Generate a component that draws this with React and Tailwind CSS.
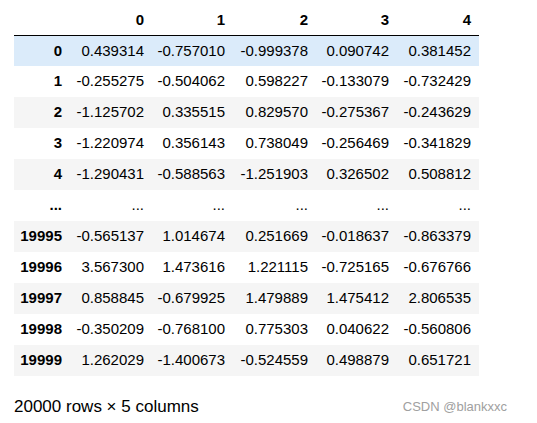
import React from "react";

const rows = [
  ["0", "0.439314", "-0.757010", "-0.999378", "0.090742", "0.381452"],
  ["1", "-0.255275", "-0.504062", "0.598227", "-0.133079", "-0.732429"],
  ["2", "-1.125702", "0.335515", "0.829570", "-0.275367", "-0.243629"],
  ["3", "-1.220974", "0.356143", "0.738049", "-0.256469", "-0.341829"],
  ["4", "-1.290431", "-0.588563", "-1.251903", "0.326502", "0.508812"],
  ["...", "...", "...", "...", "...", "..."],
  ["19995", "-0.565137", "1.014674", "0.251669", "-0.018637", "-0.863379"],
  ["19996", "3.567300", "1.473616", "1.221115", "-0.725165", "-0.676766"],
  ["19997", "0.858845", "-0.679925", "1.479889", "1.475412", "2.806535"],
  ["19998", "-0.350209", "-0.768100", "0.775303", "0.040622", "-0.560806"],
  ["19999", "1.262029", "-1.400673", "-0.524559", "0.498879", "0.651721"],
];

const widths = ["w-[56px]", "w-[82px]", "w-[81px]", "w-[83px]", "w-[81px]", "w-[82px]"];

const App = () => {
  return (
    <div className="bg-white w-[537px] h-[423px] text-black" style={{ fontFamily: '"Liberation Sans", Arial, sans-serif' }}>
      {/* dataframe table */}
      <table className="ml-[14px] table-fixed border-collapse text-[15px]">
        <thead>
          <tr className="h-[35px] border-b border-black">
            {["", "0", "1", "2", "3", "4"].map((h, i) => (
              <th key={i} className={`${widths[i]} text-right font-bold pr-2 pt-[6px]`}>
                {h}
              </th>
            ))}
          </tr>
        </thead>
        <tbody>
          {rows.map((r, i) => (
            <tr
              key={i}
              className={`h-[31px] ${i === 0 ? "bg-[#dbebfa]" : i % 2 === 0 ? "bg-[#f5f5f5]" : "bg-white"}`}
            >
              {r.map((c, j) => (
                <td key={j} className={`text-right pr-2 ${j === 0 ? "font-bold" : ""}`}>
                  {c}
                </td>
              ))}
            </tr>
          ))}
        </tbody>
      </table>
      {/* footer */}
      <div className="flex items-center justify-between pl-[14px] pr-[30px] mt-[18px]">
        <p className="text-[17px]">20000 rows × 5 columns</p>
        <p className="text-[13px] text-[#a0a0a0]">CSDN @blankxxc</p>
      </div>
    </div>
  );
};

export default App;
